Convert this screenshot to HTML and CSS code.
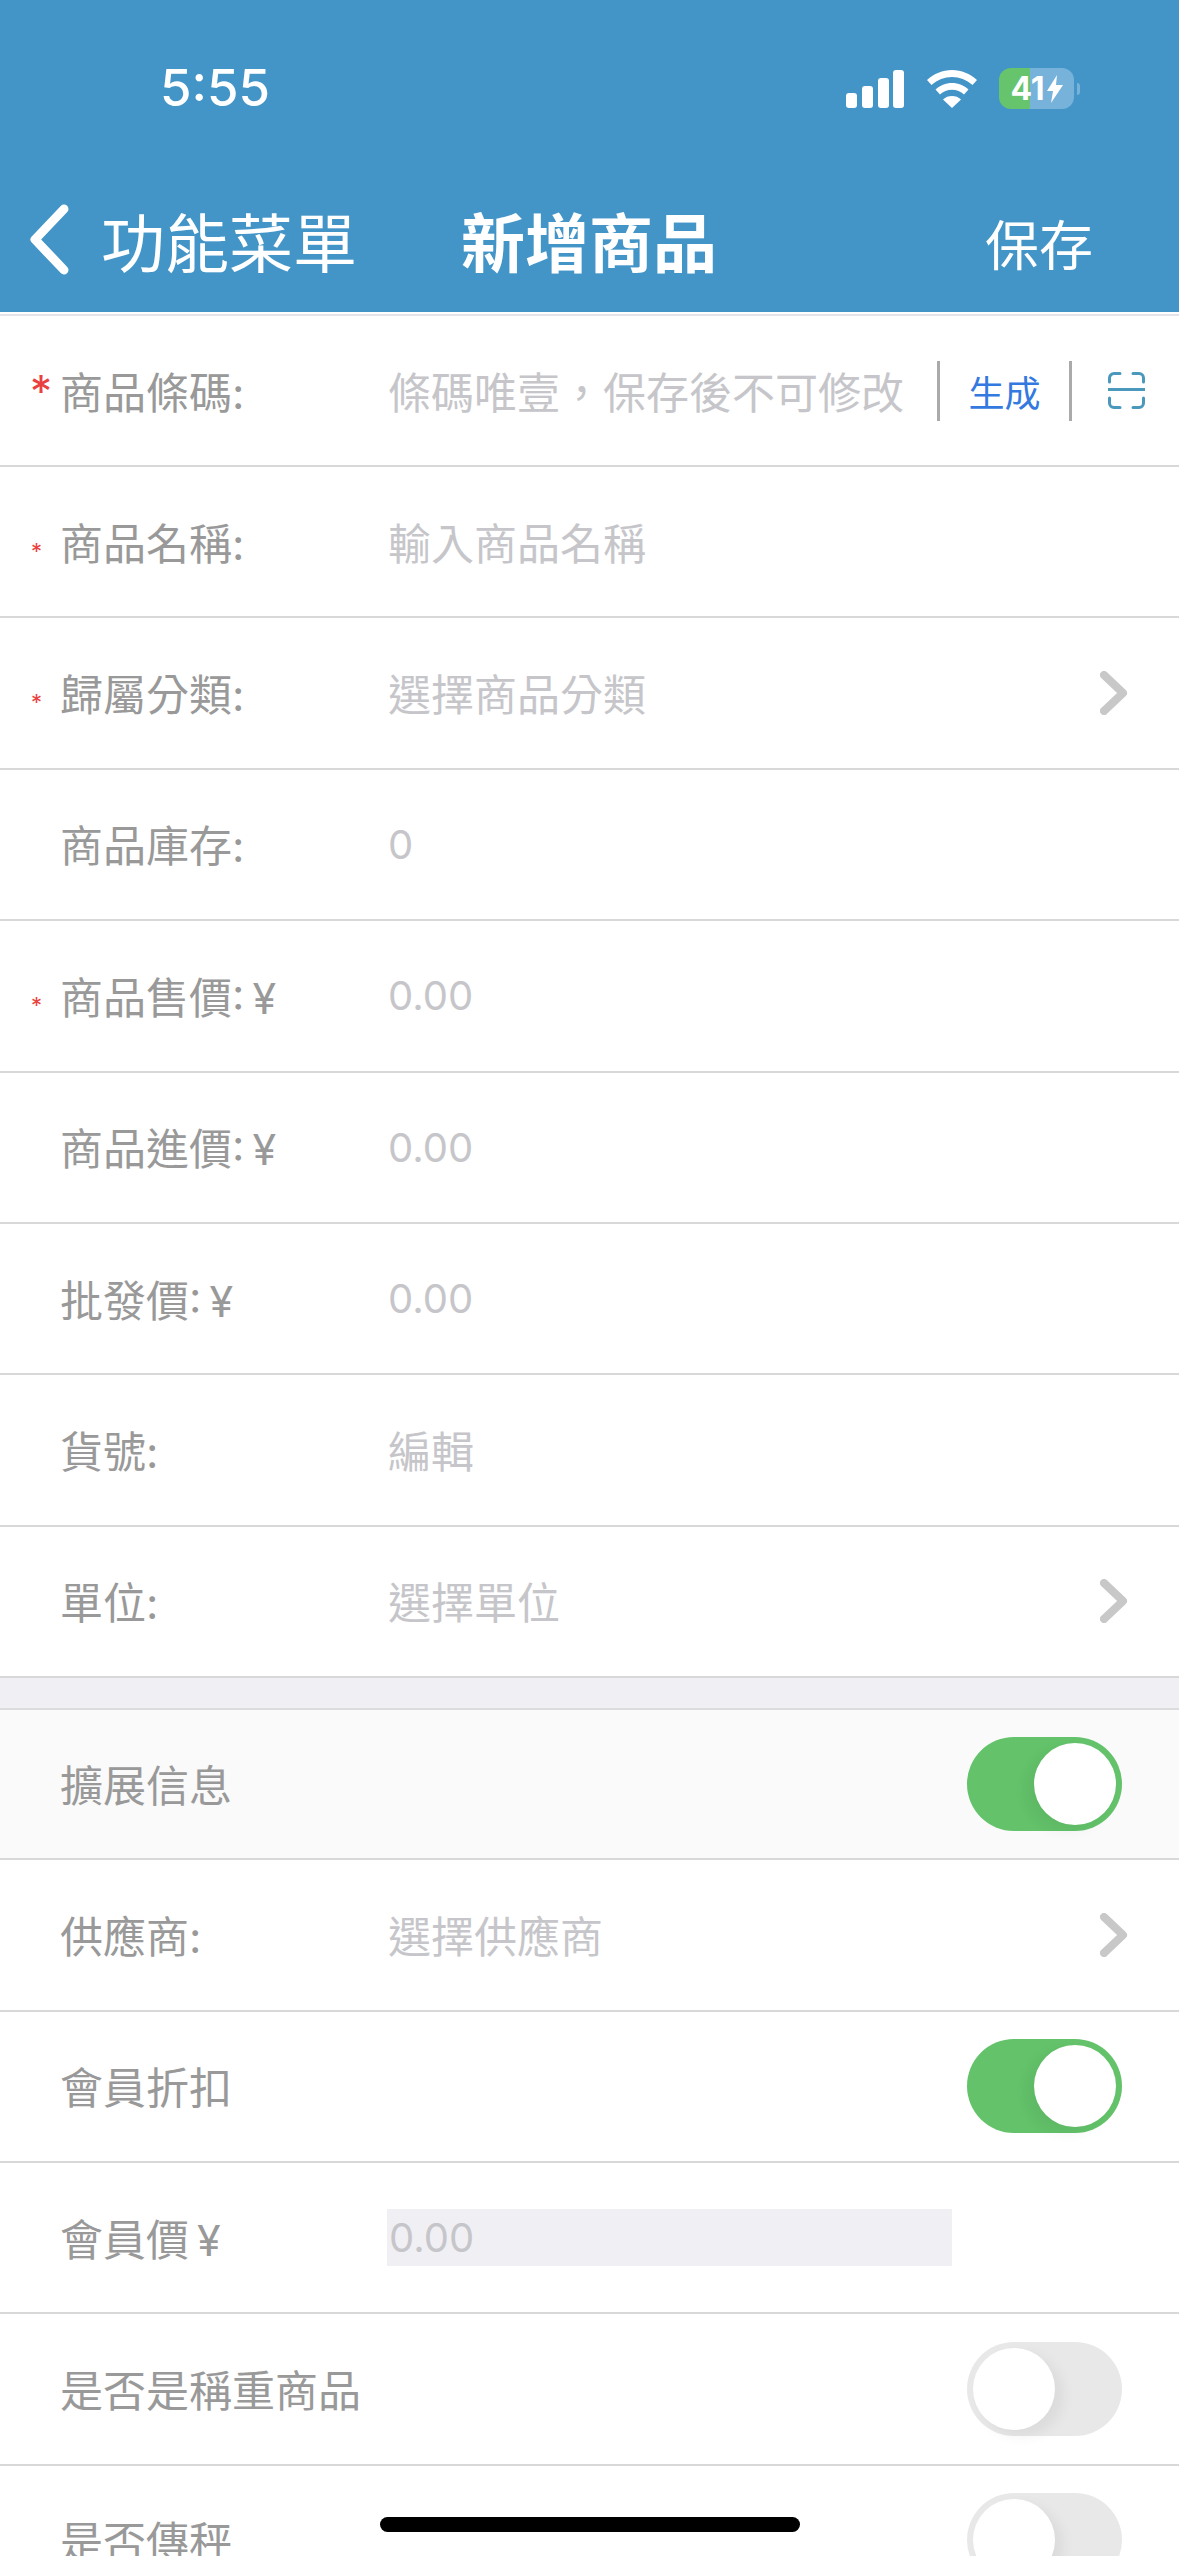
FILE: index.html
```html
<!DOCTYPE html>
<html lang="zh-Hant">
<head>
    <meta charset="UTF-8">
    <meta name="viewport" content="width=device-width, initial-scale=1.0">
    <title>新增商品</title>
    <link rel="stylesheet" href="styles.css">
</head>
<body>
    <header class="top">
        <div class="status">
            <span class="time">5:55</span>
            <div class="status-icons">
                <svg class="signal" width="58" height="38" viewBox="0 0 58 38">
                    <rect x="0" y="23" width="11" height="15" rx="3"/>
                    <rect x="16" y="16" width="11" height="22" rx="3"/>
                    <rect x="32" y="8" width="11" height="30" rx="3"/>
                    <rect x="47" y="0" width="11" height="38" rx="3"/>
                </svg>
                <svg class="wifi" width="50" height="38" viewBox="0 0 50 38">
                    <path d="M25 0C15.500 0 7 3.700 0 10l4.500 5C10.500 9.800 17.500 7 25 7s14.500 2.800 20.500 8l4.500-5C43 3.700 34.500 0 25 0z"/>
                    <path d="M25 13c-6.500 0-12 2.400-16.500 6.500l4.500 5c3.300-3 7.300-4.700 12-4.700s8.700 1.700 12 4.700l4.500-5C37 15.400 31.500 13 25 13z"/>
                    <path d="M25 26c-3.500 0-6.500 1.200-9 3.400L25 38l9-8.600C31.500 27.200 28.500 26 25 26z"/>
                </svg>
                <div class="battery">
                    <span>41</span>
                    <svg width="16" height="28" viewBox="0 0 16 28"><path d="M10 0L0 16h6l-2 12L16 10h-7z"/></svg>
                </div>
                <i class="battery-nub"></i>
            </div>
        </div>
        <nav class="nav">
            <a class="back">
                <svg width="40" height="71" viewBox="0 0 40 71"><path d="M35 5L6 35.500 35 66" fill="none" stroke="#fff" stroke-width="9" stroke-linecap="round" stroke-linejoin="round"/></svg>
                <span>功能菜單</span>
            </a>
            <h1>新增商品</h1>
            <a class="save">保存</a>
        </nav>
    </header>

    <main class="form">
        <section class="group">
            <div class="row">
                <span class="star big">*</span>
                <label>商品條碼:</label>
                <span class="hint grow">條碼唯壹，保存後不可修改</span>
                <i class="divider"></i>
                <a class="gen">生成</a>
                <i class="divider"></i>
                <svg class="scan" width="37" height="37" viewBox="0 0 37 37" fill="none" stroke="#4a98bb" stroke-width="3" stroke-linecap="round">
                    <path d="M1.500 10V6a4.500 4.500 0 0 1 4.500-4.500h6M25 1.500h6A4.500 4.500 0 0 1 35.500 6v4"/>
                    <path d="M0 17.500h37"/>
                    <path d="M1.500 26v5A4.500 4.500 0 0 0 6 35.500h6M25 35.500h6a4.500 4.500 0 0 0 4.500-4.500v-5"/>
                </svg>
            </div>
            <div class="row">
                <span class="star">*</span>
                <label>商品名稱:</label>
                <span class="hint">輸入商品名稱</span>
            </div>
            <div class="row">
                <span class="star">*</span>
                <label>歸屬分類:</label>
                <span class="hint grow">選擇商品分類</span>
                <svg class="chevron" width="28" height="44" viewBox="0 0 28 44"><path d="M4 4l19 18L4 40"/></svg>
            </div>
            <div class="row">
                <span class="star"></span>
                <label>商品庫存:</label>
                <span class="hint num">0</span>
            </div>
            <div class="row">
                <span class="star">*</span>
                <label>商品售價: ¥</label>
                <span class="hint num">0.00</span>
            </div>
            <div class="row">
                <span class="star"></span>
                <label>商品進價: ¥</label>
                <span class="hint num">0.00</span>
            </div>
            <div class="row">
                <span class="star"></span>
                <label>批發價: ¥</label>
                <span class="hint num">0.00</span>
            </div>
            <div class="row">
                <span class="star"></span>
                <label>貨號:</label>
                <span class="hint">編輯</span>
            </div>
            <div class="row">
                <span class="star"></span>
                <label>單位:</label>
                <span class="hint grow">選擇單位</span>
                <svg class="chevron" width="28" height="44" viewBox="0 0 28 44"><path d="M4 4l19 18L4 40"/></svg>
            </div>
        </section>

        <div class="gap"></div>

        <section class="group">
            <div class="row row-head">
                <span class="star"></span>
                <label class="wide">擴展信息</label>
                <div class="switch on"><i></i></div>
            </div>
            <div class="row">
                <span class="star"></span>
                <label>供應商:</label>
                <span class="hint grow">選擇供應商</span>
                <svg class="chevron" width="28" height="44" viewBox="0 0 28 44"><path d="M4 4l19 18L4 40"/></svg>
            </div>
            <div class="row">
                <span class="star"></span>
                <label class="wide">會員折扣</label>
                <div class="switch on"><i></i></div>
            </div>
            <div class="row">
                <span class="star"></span>
                <label>會員價 ¥</label>
                <span class="hint num field">0.00</span>
            </div>
            <div class="row">
                <span class="star"></span>
                <label class="wide">是否是稱重商品</label>
                <div class="switch"><i></i></div>
            </div>
            <div class="row">
                <span class="star"></span>
                <label class="wide">是否傳秤</label>
                <div class="switch"><i></i></div>
            </div>
        </section>
    </main>

    <div class="home-bar"></div>
</body>
</html>
```

FILE: styles.css
```css
* {
    box-sizing: border-box;
}
html, body {
    margin: 0;
    height: 2556px;
    overflow: hidden;
}
body {
    position: relative;
    font-family: Inter, "Noto Sans CJK TC", sans-serif;
    background: #fff;
    color: #999;
}

/* blue top part */
.top {
    height: 312px;
    background: #4395c8;
    color: #fff;
}
.status {
    height: 192px;
    display: flex;
    justify-content: space-between;
    align-items: flex-start;
    padding: 60px 99px 0 160px;
}
.time {
    font-size: 51px;
    font-weight: 500;
    line-height: 56px;
}
.status-icons {
    display: flex;
    align-items: center;
    margin-top: 8px;
}
.signal, .wifi {
    fill: #fff;
}
.wifi {
    margin-left: 23px;
}
.battery {
    width: 75px;
    height: 41px;
    margin-left: 22px;
    border-radius: 12px;
    background: linear-gradient(to right, #66c46c 41%, #76b2da 41%);
    display: flex;
    align-items: center;
    justify-content: center;
    gap: 2px;
    font-size: 32px;
    font-weight: 700;
    fill: #fff;
}
.battery-nub {
    width: 3px;
    height: 12px;
    margin-left: 3px;
    border-radius: 0 3px 3px 0;
    background: #76b2da;
}
.nav {
    display: grid;
    grid-template-columns: 432px auto 1fr;
    align-items: center;
    height: 94px;
    padding: 0 86px 0 29px;
}
.back {
    display: flex;
    align-items: center;
    gap: 32px;
    font-size: 64px;
}
.nav h1 {
    margin: 0;
    font-size: 64px;
    font-weight: 700;
}
.save {
    justify-self: end;
    font-size: 54px;
    margin-top: 6px;
}

/* rows */
.form {
    border-top: 4px solid transparent;
    background: linear-gradient(#fff 2px, #e4e4ea 2px);
    background-repeat: no-repeat;
    background-size: 100% 4px;
    background-origin: border-box;
}
.group {
    background: #fff;
}
.row {
    display: flex;
    align-items: center;
    height: 151.4px;
    border-bottom: 2px solid #d8d8d8;
    padding-right: 52px;
    font-size: 43px;
}
.row:first-child {
    height: 151px;
}
.row.row-head {
    height: 150px;
    background: #fafafa;
}
.star {
    flex: none;
    width: 60px;
    padding-left: 31px;
    padding-top: 18px;
    color: #e8413f;
    font-size: 22px;
    line-height: 1;
}
.star.big {
    font-size: 44px;
    padding-left: 30px;
    padding-top: 0;
}
label {
    flex: none;
    width: 328px;
    margin-bottom: 2px;
    color: #999;
    word-spacing: -4px;
}
label.wide {
    flex: 1;
    width: auto;
}
.hint {
    margin-bottom: 2px;
    color: #c6c6ca;
    font-size: 43px;
}
.num {
    margin-bottom: 0;
    font-size: 40px;
}
.grow {
    flex: 1;
}
.field {
    width: 565px;
    height: 57px;
    line-height: 57px;
    padding-left: 2px;
    margin-left: -1px;
    background: #f0f0f4;
}
.divider {
    flex: none;
    width: 3px;
    height: 60px;
    background: #aaa;
}
.gen {
    flex: none;
    width: 129px;
    text-align: center;
    font-size: 36px;
    color: #3479e0;
}
.scan {
    flex: none;
    margin: 0 -18px 0 36px;
}
.chevron {
    flex: none;
    margin-right: -1px;
    fill: none;
    stroke: #c8c8c8;
    stroke-width: 8;
    stroke-linecap: round;
    stroke-linejoin: round;
}
.gap {
    height: 32px;
    background: #f0f0f4;
    border-bottom: 2px solid #dcdcdf;
}

/* switches */
.switch {
    flex: none;
    width: 155px;
    height: 94px;
    margin: 0 5px 0 0;
    padding: 6px;
    border-radius: 47px;
    background: #e8e8e8;
}
.switch i {
    display: block;
    width: 82px;
    height: 82px;
    border-radius: 50%;
    background: #fff;
    box-shadow: 8px 6px 14px rgba(0, 0, 0, 0.06);
}
.switch.on {
    background: #63c26a;
}
.switch.on i {
    margin-left: auto;
    box-shadow: -8px 6px 14px rgba(0, 0, 0, 0.05);
}

.home-bar {
    position: absolute;
    left: 380px;
    top: 2517px;
    width: 420px;
    height: 15px;
    border-radius: 8px;
    background: #000;
}
```
